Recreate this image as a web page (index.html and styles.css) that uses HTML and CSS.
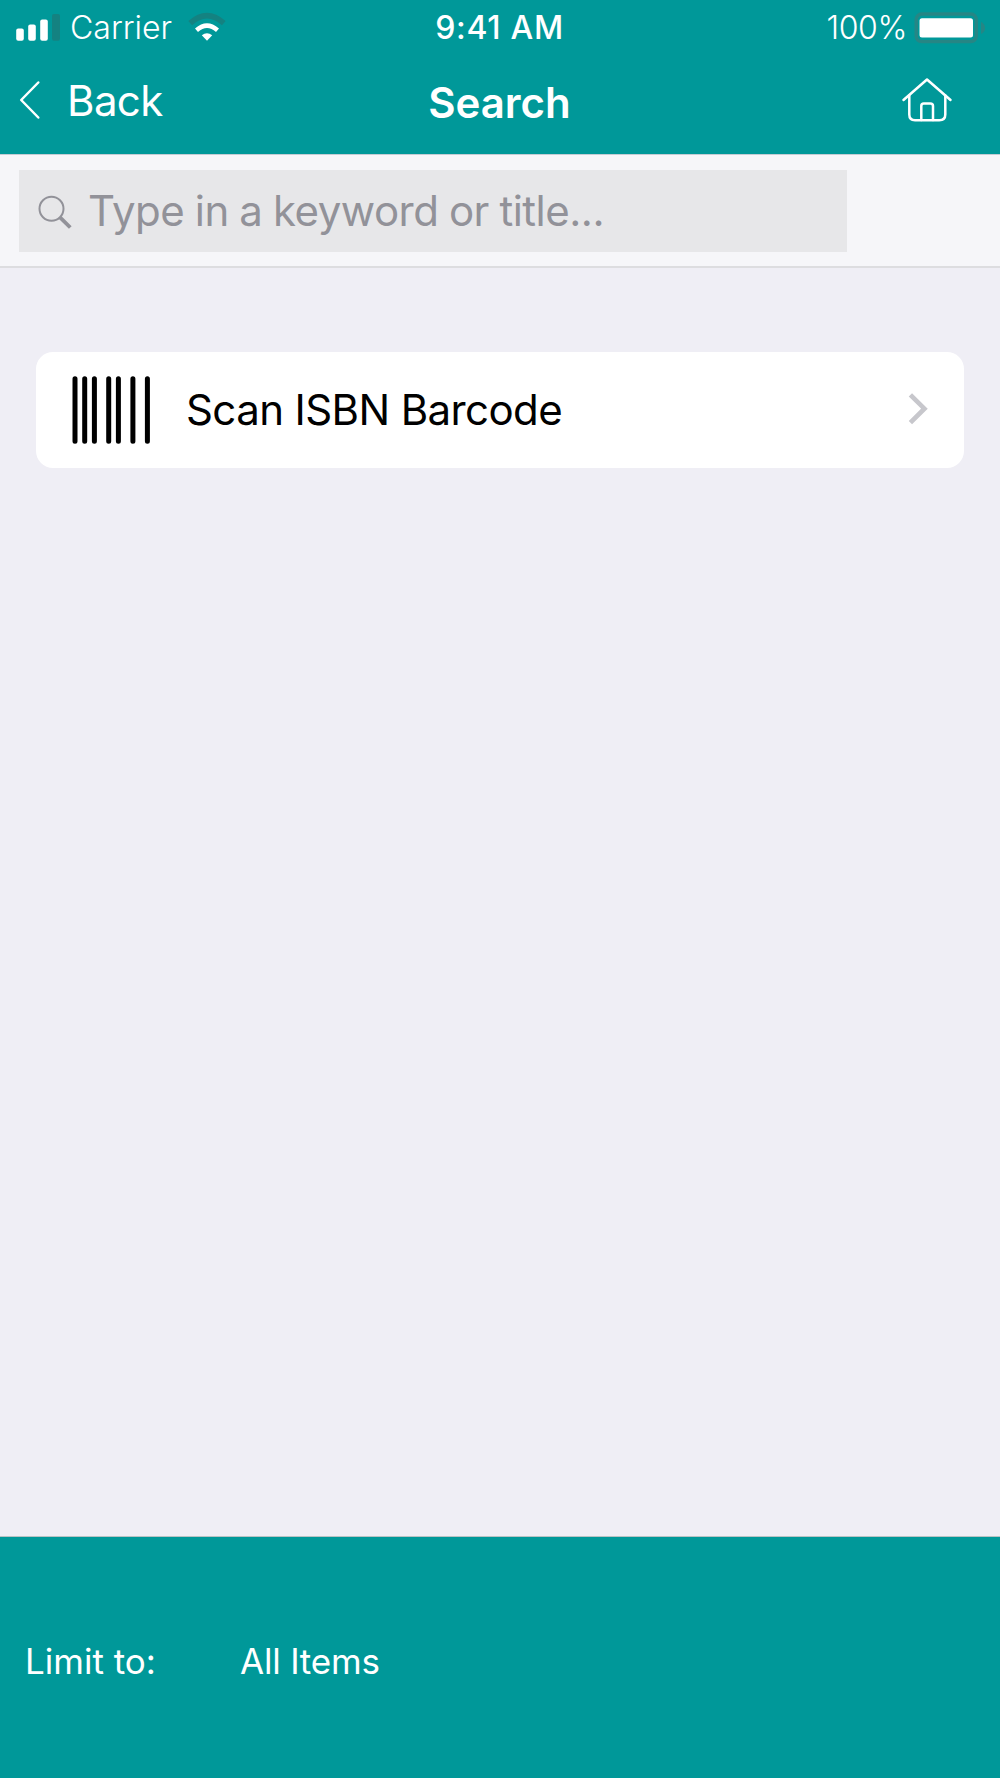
FILE: index.html
```html
<!DOCTYPE html>
<html lang="en">
<head>
<meta charset="utf-8">
<title>Search</title>
<link rel="stylesheet" href="styles.css">
</head>
<body>
<div class="app">
  <header class="header">
    <div class="status">
      <div class="status-left">
        <svg class="signal" width="46" height="28" viewBox="0 0 46 28">
          <rect x="0.2" y="14.500" width="7.600" height="12.300" rx="2" fill="#fff"/>
          <rect x="12.200" y="10.500" width="7.600" height="16.300" rx="2" fill="#fff"/>
          <rect x="24.200" y="5.500" width="7.600" height="21.300" rx="2" fill="#fff"/>
          <rect x="36" y="0" width="8" height="26.800" rx="2" fill="#148281"/>
        </svg>
        <span class="carrier">Carrier</span>
        <svg class="wifi" width="38" height="28" viewBox="0 0 38 28">
          <path d="M2.200 9.200Q19-5.800 35.800 9.200" fill="none" stroke="#148281" stroke-width="5.600"/>
          <path d="M8.500 16.200Q19 7.200 29.500 16.200" fill="none" stroke="#fff" stroke-width="4.600"/>
          <path d="M13.800 21.200Q19 17.200 24.200 21.200L19 26.800Z" fill="#fff"/>
        </svg>
      </div>
      <span class="clock">9:41 AM</span>
      <div class="status-right">
        <span class="percent">100%</span>
        <svg class="battery" width="70" height="32" viewBox="0 0 70 32">
          <rect x="2.200" y="2" width="60.100" height="27.600" rx="5.500" fill="none" stroke="#268685" stroke-width="3.400"/>
          <rect x="5.500" y="6.200" width="53.500" height="19.300" rx="2.500" fill="#fff"/>
          <path d="M67 9.800Q71 12 71 16T67 22Z" fill="#268685"/>
        </svg>
      </div>
    </div>
    <nav class="nav">
      <a class="back">
        <svg width="22" height="40" viewBox="0 0 22 40"><path d="M19.300 1.500L2.200 19 19.300 36.500" fill="none" stroke="#fff" stroke-width="2.500" stroke-linecap="round" stroke-linejoin="round"/></svg>
        <span class="back-label">Back</span>
      </a>
      <h1 class="title">Search</h1>
      <a class="home">
        <svg width="50" height="46" viewBox="0 0 50 46" fill="none" stroke="#fff" stroke-width="2.500" stroke-linecap="round" stroke-linejoin="round">
          <path d="M1.500 22L25 1.500 48.500 22"/>
          <path d="M7.300 17.500V36.500Q7.300 42.200 13 42.200H37.300Q43.300 42.200 43.300 36.500V17.500"/>
          <path d="M19.300 42V28Q19.300 25.500 21.800 25.500H28.300Q31 25.500 31 28V42"/>
        </svg>
      </a>
    </nav>
  </header>
  <section class="search-bar">
    <div class="field">
      <svg width="34" height="36" viewBox="0 0 34 36" fill="none" stroke="#929299"><circle cx="13.500" cy="15.800" r="12" stroke-width="2"/><path d="M22 24.300L32.300 34.500" stroke-width="3.800"/></svg>
      <span class="placeholder">Type in a keyword or title...</span>
    </div>
  </section>
  <main class="content">
    <a class="card">
      <svg width="80" height="68" viewBox="0 0 80 68" stroke="#000" stroke-width="5" stroke-linecap="round"><path d="M4 2.700V65.200M13.700 2.700V65.200M23.400 2.700V65.200M37.700 2.700V65.200M47.400 2.700V65.200M61.900 2.700V65.200M76.400 2.700V65.200"/></svg>
      <span class="card-label">Scan ISBN Barcode</span>
      <svg class="chevron" width="20" height="34" viewBox="0 0 20 34"><path d="M1.400 1.800L15.400 15.700 1.400 29.600" fill="none" stroke="#c7c7cc" stroke-width="4.700"/></svg>
    </a>
  </main>
  <footer class="footer">
    <span class="limit">Limit to:</span>
    <span class="scope">All Items</span>
  </footer>
</div>
</body>
</html>
```
FILE: styles.css
```css
* { box-sizing: border-box; }
body {
  margin: 0;
  font-family: Inter, "Liberation Sans", sans-serif;
  background: #efeef5;
}
svg { display: block; flex: none; overflow: visible; }
.app {
  display: flex;
  flex-direction: column;
  width: 1000px;
  height: 1778px;
}
.header {
  height: 155px;
  background: #009899;
  border-bottom: 1px solid #c4ccd4;
  color: #fff;
}
.status {
  display: grid;
  grid-template-columns: 1fr auto 1fr;
  align-items: center;
  height: 55px;
  padding: 0 16px;
  font-size: 32px;
  line-height: 40px;
}
.status-left, .status-right { display: flex; align-items: center; }
.status-right { justify-content: flex-end; }
.carrier { margin-left: 8px; font-weight: 300; }
.wifi { margin-left: 16px; }
.clock { margin-right: 1px; font-weight: 500; letter-spacing: 0.7px; }
.percent { margin-right: 7px; font-weight: 300; letter-spacing: -0.4px; }
.nav {
  display: grid;
  grid-template-columns: 1fr auto 1fr;
  align-items: center;
  height: 92px;
  padding: 0 19px;
  font-size: 42px;
  line-height: 50px;
}
.back { display: flex; align-items: center; }
.back-label { margin-left: 26px; letter-spacing: -0.6px; }
.title { margin: 3px 1px 0 0; font-size: 42px; font-weight: 600; }
.home { justify-self: end; margin-right: 29px; }
.search-bar {
  height: 113px;
  padding: 15px 19px;
  background: #f6f6f9;
  border-bottom: 2px solid #dddde0;
}
.field {
  display: flex;
  align-items: center;
  width: 828px;
  height: 82px;
  padding-left: 19px;
  background: #e7e7e9;
  color: #929299;
  font-size: 42px;
  line-height: 50px;
}
.placeholder {
  margin-left: 16px;
  letter-spacing: -0.5px;
  word-spacing: -0.8px;
  white-space: nowrap;
}
.content { flex: 1; padding: 84px 36px; }
.card {
  display: flex;
  align-items: center;
  height: 116px;
  padding: 0 35px;
  border-radius: 17px;
  background: #fff;
  color: #000;
  font-size: 42px;
  line-height: 50px;
}
.card-label { margin-left: 35px; letter-spacing: -0.6px; }
.chevron { margin-left: auto; }
.footer {
  display: flex;
  align-items: center;
  height: 242px;
  padding: 6px 25px 0;
  border-top: 1px solid #b9c3c4;
  background: #009899;
  color: #fff;
  font-size: 35px;
  line-height: 42px;
}
.limit { width: 215px; }
.scope { letter-spacing: -0.2px; }
```
